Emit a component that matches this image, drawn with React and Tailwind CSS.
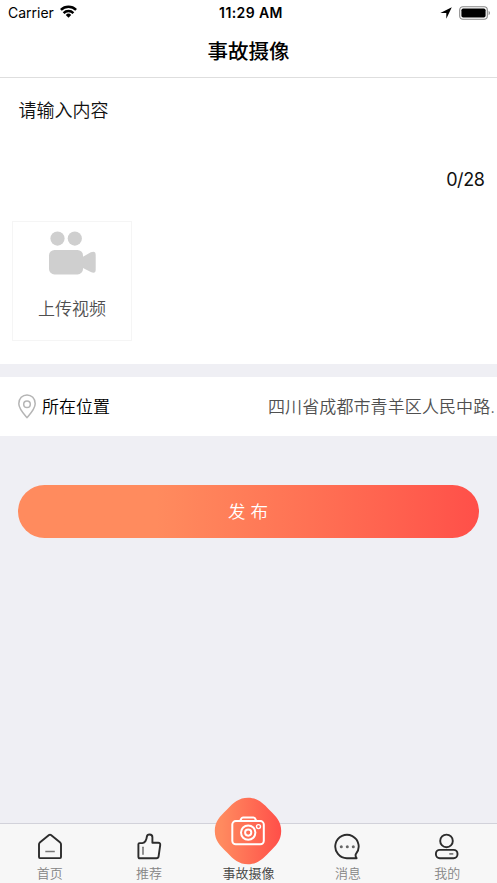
import React, { useState } from "react";

const HomeIcon = () => (
  <svg width="28" height="28" viewBox="0 0 28 28" fill="none" stroke="#2c2c2c" strokeWidth="1.9" strokeLinejoin="round">
    <path d="M13 2.1 Q14 1.3 15 2.1 L24.2 9.6 Q25 10.3 25 11.4 V24.1 Q25 25.1 24 25.1 H4 Q3 25.1 3 24.1 V11.4 Q3 10.3 3.8 9.6 Z" />
    <path d="M9.3 18.5 H18.8" stroke="#777" strokeWidth="1.5" />
  </svg>
);

const LikeIcon = () => (
  <svg width="28" height="28" viewBox="0 0 28 28" fill="none" stroke="#2c2c2c" strokeWidth="1.9" strokeLinejoin="round" strokeLinecap="round">
    <path d="M3.4 11.3 Q3.4 10.1 4.6 10.1 H7.4 Q9.6 9.9 10.5 8 Q11.6 6 11.8 3.8 Q12.1 1.5 14.6 1.5 Q17.4 1.5 17.4 4.3 V9.8 H23.2 Q25.5 9.8 25.2 12.1 L23.6 23.4 Q23.3 25.3 21.4 25.3 H5 Q3.4 25.3 3.4 23.7 Z" />
    <path d="M8 14.3 V21.2" stroke="#666" strokeWidth="1.4" />
  </svg>
);

const MessageIcon = () => (
  <svg width="28" height="28" viewBox="0 0 28 28" fill="none" stroke="#2c2c2c" strokeWidth="1.9" strokeLinejoin="round">
    <path d="M21.7 21.3 A11.7 11.7 0 1 0 13.3 25.2 H22.6 Q21.2 23.4 21.7 21.3 Z" />
    <g fill="#666" stroke="none">
      <circle cx="7.3" cy="13.8" r="1.5" />
      <circle cx="13.3" cy="13.8" r="1.5" />
      <circle cx="19.3" cy="13.8" r="1.5" />
    </g>
  </svg>
);

const UserIcon = () => (
  <svg width="28" height="28" viewBox="0 0 28 28" fill="none" stroke="#2c2c2c" strokeWidth="1.9">
    <circle cx="13.5" cy="7.9" r="6.3" />
    <rect x="2.9" y="16.9" width="21.6" height="8.3" rx="3.9" />
    <path d="M16.3 20.9 H20.3" stroke="#666" strokeWidth="1.5" />
  </svg>
);

const CameraIcon = () => (
  <svg width="68" height="68" viewBox="0 0 68 68" fill="none" className="-mt-9 mr-px -mb-1 shrink-0">
    <defs>
      <linearGradient id="camera" x1="0" y1="0" x2="1" y2="0">
        <stop offset="0.1" stopColor="#ff8a5f" />
        <stop offset="1" stopColor="#ff4f49" />
      </linearGradient>
    </defs>
    <path
      d="M34 0.8 C43 0.8 48.5 5.6 55.2 12.8 C62.4 19.5 67.2 25 67.2 34 C67.2 43 62.4 48.5 55.2 55.2 C48.5 62.4 43 67.2 34 67.2 C25 67.2 19.5 62.4 12.8 55.2 C5.6 48.5 0.8 43 0.8 34 C0.8 25 5.6 19.5 12.8 12.8 C19.5 5.6 25 0.8 34 0.8 Z"
      fill="url(#camera)"
    />
    <g stroke="#fff" strokeWidth="2">
      <rect x="18.3" y="24.1" width="31.5" height="23.2" rx="3.5" />
      <path d="M26.2 23.8 L27.4 21.4 Q27.9 20.4 29 20.4 H39.4 Q40.5 20.4 41 21.4 L42.2 23.8" />
      <circle cx="34.2" cy="35.6" r="7.2" />
      <circle cx="34.2" cy="35.6" r="3.1" />
      <circle cx="44.5" cy="29.6" r="2" strokeWidth="1.4" />
    </g>
  </svg>
);

const tabs = [
  { name: "首页", icon: <HomeIcon /> },
  { name: "推荐", icon: <LikeIcon /> },
  { name: "事故摄像", icon: <CameraIcon /> },
  { name: "消息", icon: <MessageIcon /> },
  { name: "我的", icon: <UserIcon /> },
];

const StatusBar = () => (
  <div className="grid h-[26px] grid-cols-3 items-center pr-1.5 pl-2 text-black">
    <div className="-mt-0.5 flex items-center gap-1.5 text-[14px]">
      <span>Carrier</span>
      <svg width="17" height="13" viewBox="0 0 17 13" fill="none" stroke="#000" strokeWidth="2.5" className="-mt-px">
        <path d="M0.9 4.9 A10.8 10.8 0 0 1 16.1 4.9" />
        <path d="M3.6 8.1 A7 7 0 0 1 13.4 8.1" />
        <path d="M8.5 12.7 L5.8 9.9 A3.9 3.9 0 0 1 11.2 9.9 Z" fill="#000" stroke="none" />
      </svg>
    </div>
    <div className="-mt-0.5 pl-[3px] text-center text-[14px] font-semibold tracking-[0.4px]">11:29 AM</div>
    <div className="-mt-px flex items-center justify-end gap-[7px]">
      <svg width="12" height="12" viewBox="0 0 12 12">
        <path d="M11.8 0.3 L6.3 11.7 V5.9 H0.3 Z" fill="#000" />
      </svg>
      <svg width="32" height="14" viewBox="0 0 32 14">
        <rect x="0.7" y="0.7" width="27.6" height="12.6" rx="3.2" fill="none" stroke="#888" strokeWidth="1.1" />
        <rect x="2.4" y="2.4" width="24.2" height="9.2" rx="1.8" fill="#000" />
        <path d="M29.6 4.8 Q31 5.5 31 7 Q31 8.5 29.6 9.2 Z" fill="#888" />
      </svg>
    </div>
  </div>
);

const App = () => {
  const [active, setActive] = useState(2);

  return (
    <div className="flex h-[883px] w-full flex-col overflow-hidden bg-[#efeff4] font-['Inter','Noto_Sans_CJK_SC',sans-serif] text-black">
      <header className="h-[78px] shrink-0 border-b border-[#dedede] bg-white">
        <StatusBar />
        <h1 className="pt-[11px] text-center text-[20.5px] leading-[30px] font-medium">事故摄像</h1>
      </header>

      <section className="h-[286px] shrink-0 bg-white">
        <div className="h-[87px] px-[18.5px] pt-[19px] text-[18px] leading-[27px] font-[350] text-[#111]">
          请输入内容
        </div>
        <div className="pr-[12.5px] text-right text-[18px] leading-[30px] tracking-[-0.4px] text-[#111]">0/28</div>
        <button className="mt-[26px] ml-3 flex h-[120px] w-[120px] flex-col items-center border border-[#f5f5f5]">
          <svg width="48" height="44" viewBox="0 0 48 44" fill="#cfcfcf" className="mt-[9px]">
            <circle cx="9.5" cy="7.6" r="7.1" />
            <circle cx="26.8" cy="7.6" r="7.1" />
            <rect x="1" y="19" width="34" height="24.4" rx="5.5" />
            <path d="M34.5 26 L42.8 21.3 Q47.7 19.2 47.7 24 V38.5 Q47.7 43.4 42.8 41.1 L34.5 36.8 Z" />
          </svg>
          <span className="mt-[21px] text-[17px] leading-[26px] font-[350] text-[#505050]">上传视频</span>
        </button>
      </section>

      <section className="mt-[13px] flex h-[59px] shrink-0 items-center justify-between bg-white pl-[18px] text-[17px] font-[350]">
        <div className="flex items-center gap-1.5">
          <svg width="18" height="25" viewBox="0 0 18 25" fill="none" stroke="#b5b5b5" strokeWidth="1.5">
            <path d="M9 23.6 C6.5 20.7 0.8 14.8 0.8 9.7 C0.8 4.5 4.5 0.9 9 0.9 C13.5 0.9 17.2 4.5 17.2 9.7 C17.2 14.8 11.5 20.7 9 23.6 Z" />
            <circle cx="9" cy="10.3" r="3.3" />
          </svg>
          <span className="pt-[3px]">所在位置</span>
        </div>
        <span className="w-[229px] overflow-hidden pt-[3px] whitespace-nowrap tracking-[0.1px] text-[#505050]">
          四川省成都市青羊区人民中路.
        </span>
      </section>

      <button className="mx-[18px] mt-[49px] h-[53px] shrink-0 rounded-full bg-linear-to-r from-[#ff8b5e] from-30% to-[#ff4f49] pt-px pr-px text-[17.5px] font-[350] text-white">
        发 布
      </button>

      <nav className="mt-auto flex h-[60px] shrink-0 border-t border-[#d2d2da] bg-[#f7f7f7]">
        {tabs.map((tab, i) => (
          <button
            key={tab.name}
            onClick={() => setActive(i)}
            className="flex flex-1 flex-col items-center justify-between pt-[9px] pb-px"
          >
            {tab.icon}
            <span
              className={`shrink-0 text-[13px] leading-[18px] font-[350] ${
                active === i ? "text-[#444]" : "text-[#858585]"
              }`}
            >
              {tab.name}
            </span>
          </button>
        ))}
      </nav>
    </div>
  );
};

export default App;
